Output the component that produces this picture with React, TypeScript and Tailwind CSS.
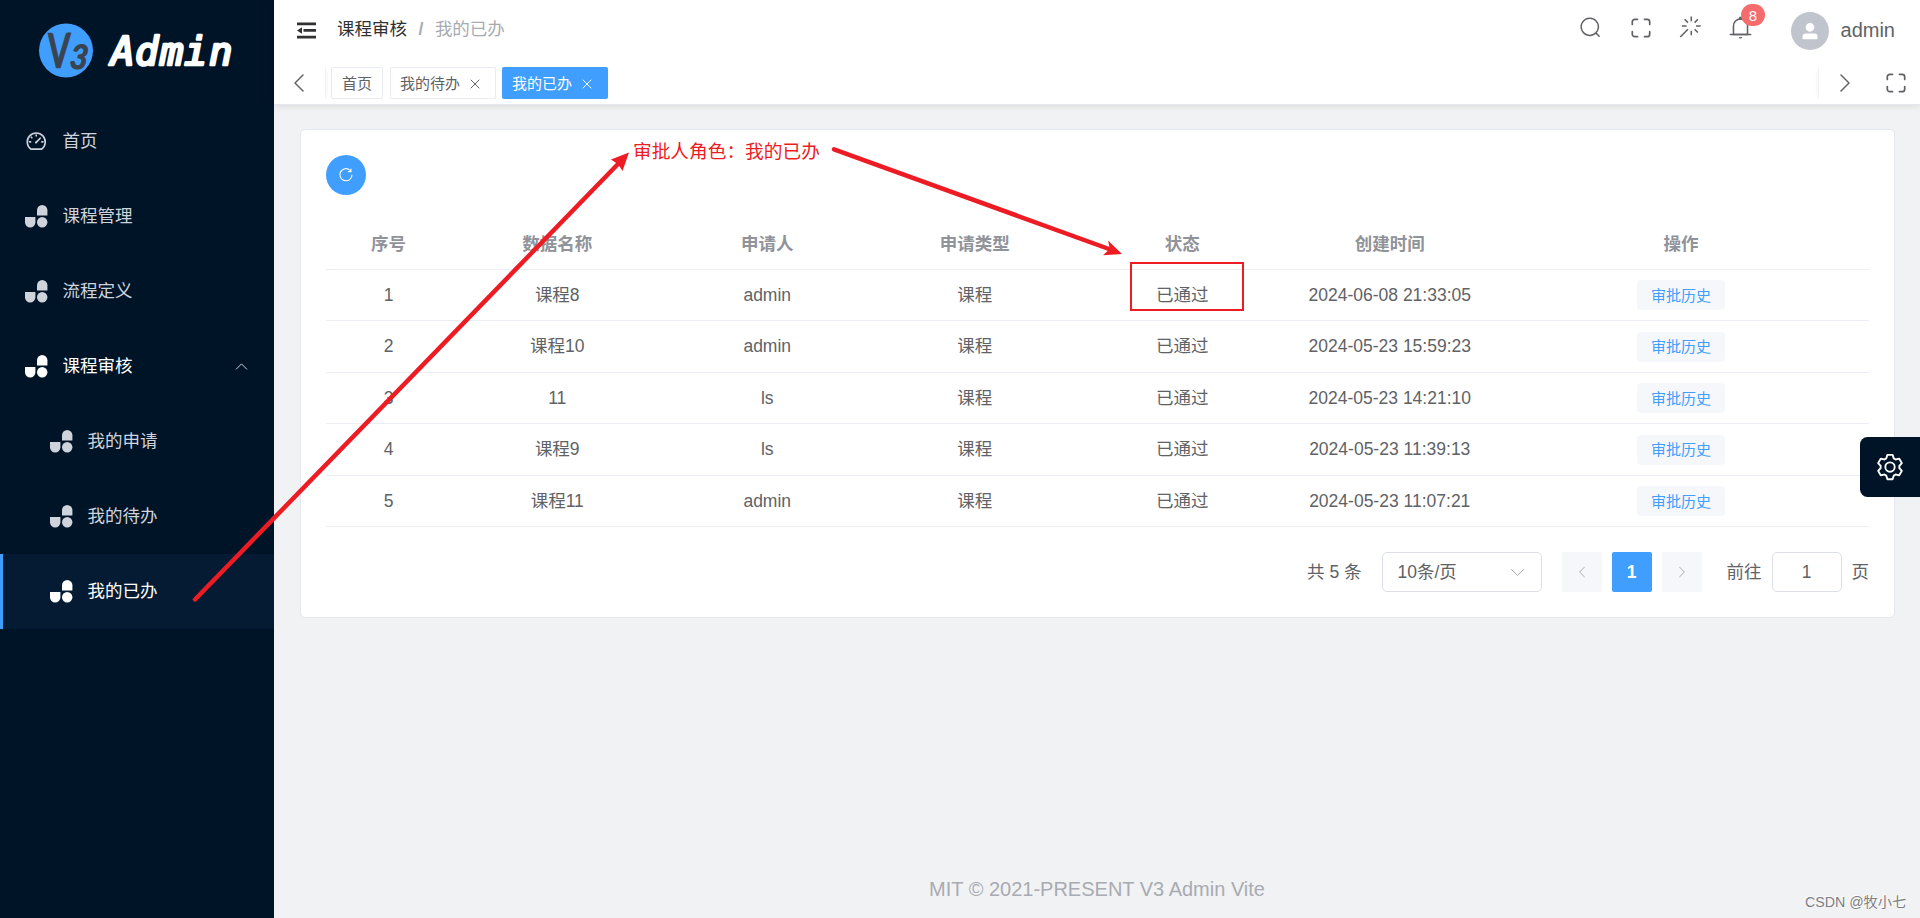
import React from "react";

const MENU = [
  { label: "首页", home: true },
  { label: "课程管理" },
  { label: "流程定义" },
  { label: "课程审核", open: true },
  { label: "我的申请", sub: true },
  { label: "我的待办", sub: true },
  { label: "我的已办", sub: true, active: true },
];

const ROWS = [
  ["1", "课程8", "admin", "课程", "已通过", "2024-06-08 21:33:05"],
  ["2", "课程10", "admin", "课程", "已通过", "2024-05-23 15:59:23"],
  ["3", "11", "ls", "课程", "已通过", "2024-05-23 14:21:10"],
  ["4", "课程9", "ls", "课程", "已通过", "2024-05-23 11:39:13"],
  ["5", "课程11", "admin", "课程", "已通过", "2024-05-23 11:07:21"],
];

const ROW_HEIGHTS = ["h-[51px]", "h-[52px]", "h-[51px]", "h-[52px]", "h-[51px]"];

const HEADERS = ["序号", "数据名称", "申请人", "申请类型", "状态", "创建时间", "操作"];

const GRID =
  "grid grid-cols-[125px_212.5px_207.5px_207.5px_207.5px_207.5px_375px] items-center text-center border-b border-[#ebeef5]";

function Glyph({ d, className }: { d: string[]; className: string }) {
  return (
    <svg viewBox="0 0 1024 1024" fill="currentColor" className={className}>
      {d.map((p) => (
        <path key={p} d={p} />
      ))}
    </svg>
  );
}

const SEARCH = [
  "m795.904 750.72 124.992 124.928a32 32 0 0 1-45.248 45.248L750.656 795.904a416 416 0 1 1 45.248-45.248zM480 832a352 352 0 1 0 0-704 352 352 0 0 0 0 704",
];
const MAGIC = [
  "M512 64h64v192h-64zm0 576h64v192h-64zM160 480v-64h192v64zm576 0v-64h192v64zM249.856 199.04l45.248-45.184L430.848 289.6 385.6 334.848 249.856 199.104zM657.152 606.4l45.248-45.248 135.744 135.744-45.248 45.248zM114.048 923.2 68.8 877.952l316.8-316.8 45.248 45.248zM702.4 334.848 657.152 289.6l135.744-135.744 45.248 45.248z",
];
const BELL = [
  "M512 64a64 64 0 0 1 64 64v64H448v-64a64 64 0 0 1 64-64",
  "M256 768h512V448a256 256 0 1 0-512 0zm256-640a320 320 0 0 1 320 320v384H192V448a320 320 0 0 1 320-320",
  "M96 768h832q32 0 32 32t-32 32H96q-32 0-32-32t32-32m352 128h128a64 64 0 0 1-128 0",
];
const USER = [
  "M288 320a224 224 0 1 0 448 0 224 224 0 1 0-448 0m544 608H160a32 32 0 0 1-32-32v-96a160 160 0 0 1 160-160h448a160 160 0 0 1 160 160v96a32 32 0 0 1-32 32z",
];
const REFRESH = [
  "M784.512 230.272v-50.56a32 32 0 1 1 64 0v149.056a32 32 0 0 1-32 32H667.52a32 32 0 1 1 0-64h92.992A320 320 0 1 0 524.8 833.152a320 320 0 0 0 320-320h64a384 384 0 0 1-384 384 384 384 0 0 1-384-384 384 384 0 0 1 643.712-282.88z",
];
const SETTING = [
  "M600.704 64a32 32 0 0 1 30.464 22.208l35.2 109.376c14.784 7.232 28.928 15.36 42.432 24.512l112.384-24.192a32 32 0 0 1 34.432 15.36L944.32 364.8a32 32 0 0 1-4.032 37.504l-77.12 85.12a357.12 357.12 0 0 1 0 49.024l77.12 85.248a32 32 0 0 1 4.032 37.504l-88.704 153.6a32 32 0 0 1-34.432 15.296L708.8 803.904c-13.44 9.088-27.648 17.28-42.368 24.512l-35.264 109.376A32 32 0 0 1 600.704 960H423.296a32 32 0 0 1-30.464-22.208L357.696 828.48a351.616 351.616 0 0 1-42.56-24.64l-112.32 24.256a32 32 0 0 1-34.432-15.36L79.68 659.2a32 32 0 0 1 4.032-37.504l77.12-85.248a357.12 357.12 0 0 1 0-48.896l-77.12-85.248A32 32 0 0 1 79.68 364.8l88.704-153.6a32 32 0 0 1 34.432-15.296l112.32 24.256c13.568-9.152 27.776-17.408 42.56-24.64l35.2-109.312A32 32 0 0 1 423.232 64H600.64zm-23.424 64H446.72l-36.352 113.088-24.512 11.968a294.113 294.113 0 0 0-34.816 20.096l-22.656 15.36-116.224-25.088-65.28 113.152 79.68 88.192-1.92 27.136a293.12 293.12 0 0 0 0 40.192l1.92 27.136-79.808 88.192 65.344 113.152 116.224-25.024 22.656 15.296a294.113 294.113 0 0 0 34.816 20.096l24.512 11.968L446.72 896h130.688l36.48-113.152 24.448-11.904a288.282 288.282 0 0 0 34.752-20.096l22.592-15.296 116.288 25.024 65.28-113.152-79.744-88.192 1.92-27.136a293.12 293.12 0 0 0 0-40.256l-1.92-27.136 79.808-88.128-65.344-113.152-116.288 24.96-22.592-15.232a287.616 287.616 0 0 0-34.752-20.096l-24.448-11.904L577.344 128zM512 320a192 192 0 1 1 0 384 192 192 0 0 1 0-384m0 64a128 128 0 1 0 0 256 128 128 0 0 0 0-256",
];

function Chevron({ d, className }: { d: string; className: string }) {
  return (
    <svg viewBox="0 0 20 20" fill="none" stroke="currentColor" strokeLinecap="round" strokeLinejoin="round" className={className}>
      <path d={d} vectorEffect="non-scaling-stroke" />
    </svg>
  );
}
const LEFT = "M14 2 6 10 14 18";
const RIGHT = "M6 2 14 10 6 18";
const UP = "M2 14 10 6 18 14";
const DOWN = "M2 6 10 14 18 6";
const CROSS = "M2 2 18 18M18 2 2 18";

function Fullscreen() {
  return (
    <svg viewBox="0 0 20 20" fill="none" stroke="currentColor" strokeWidth="1.7" strokeLinecap="round" className="size-5 shrink-0">
      <path d="M1.3 6.5V3.8A2.5 2.5 0 0 1 3.8 1.3H6.5M13.5 1.3h2.7a2.5 2.5 0 0 1 2.5 2.5v2.7M18.7 13.5v2.7a2.5 2.5 0 0 1-2.5 2.5h-2.7M6.5 18.7H3.8a2.5 2.5 0 0 1-2.5-2.5v-2.7" />
    </svg>
  );
}

function BlocksIcon() {
  return (
    <svg viewBox="0 0 22.5 22.5" fill="currentColor" className="size-[22.5px] shrink-0">
      <path d="M0 12h10.4v5.2a5.2 5.2 0 0 1-10.4 0z" />
      <path d="M12 10.4V5.2a5.2 5.2 0 0 1 10.4 0v5.2z" />
      <circle cx="17.2" cy="17.2" r="5.2" />
    </svg>
  );
}

function DashboardIcon() {
  return (
    <svg viewBox="0 0 22.5 22.5" fill="none" stroke="currentColor" strokeWidth="1.6" strokeLinecap="round" className="size-[22.5px] shrink-0">
      <path d="M5.8 19.1a9 9 0 1 1 10.9 0z" strokeLinejoin="round" />
      <path d="M11.2 12.4 15.2 8.2M11.2 5v1M6.3 7.2l.6.6M4.6 11.9h1M16.9 11.9h1" />
      <circle cx="11" cy="12.6" r="1" fill="currentColor" stroke="none" />
    </svg>
  );
}

function Sidebar() {
  return (
    <aside className="flex w-[274px] shrink-0 flex-col bg-[#001428] text-[#cfd3dc]">
      <div className="h-[104px] shrink-0">
        <svg viewBox="0 0 274 104" className="h-[104px] w-[274px]">
          <circle cx="66" cy="50.5" r="27" fill="#409eff" />
          <g fill="#3a4350" stroke="#3a4350" strokeLinejoin="round" fontFamily="Lato, sans-serif">
            <text transform="translate(47 68) rotate(-1) skewX(-3) scale(.68 1)" fontSize="48" fontWeight="700" strokeWidth="1">V</text>
            <text transform="translate(69 68) rotate(6) scale(.92 1)" fontSize="34" fontWeight="700" fontStyle="italic" strokeWidth="1">3</text>
          </g>
          <text
            y="65"
            x="111 135 160 184 209"
            fill="#fff"
            stroke="#fff"
            strokeWidth="2.6"
            strokeLinejoin="round"
            fontFamily="'DejaVu Sans Mono', monospace"
            fontStyle="italic"
            fontSize="39"
          >
            Admin
          </text>
        </svg>
      </div>
      {MENU.map((m) => (
        <div
          key={m.label}
          className={
            "flex h-[75px] shrink-0 items-center text-[17.5px] " +
            (m.sub ? "pl-[50px] " : "pl-[25px] ") +
            (m.active ? "bg-[#041b33] text-white shadow-[inset_3px_0_0_#409eff] " : "") +
            (m.open ? "text-white" : "")
          }
        >
          {m.home ? <DashboardIcon /> : <BlocksIcon />}
          <span className="ml-[15px] flex-1 leading-none">{m.label}</span>
          {m.open && <Chevron d={UP} className="mr-[26px] size-[13px] text-[#cfd3dc]" />}
        </div>
      ))}
    </aside>
  );
}

function Header() {
  return (
    <header className="relative flex h-[105px] shrink-0 flex-col border-b border-[#e4e7ed] bg-white shadow-[0_0_8px_rgba(0,0,0,0.12)]">
      <div className="flex h-[62px] items-center pl-[23px] pr-[25px]">
        <svg viewBox="0 0 19 17" fill="#303133" className="mb-px h-[17px] w-[19px]">
          <path d="M0 .5h19v2.7H0zM6.500 7.100h12.500v2.700H6.500zM0 13.800h19v2.700H0zM0 8.450 5 5.200v6.500z" />
        </svg>
        <div className="ml-[21px] flex flex-1 items-center pb-[2px] text-[17.5px] leading-none">
          <span className="text-[#303133]">课程审核</span>
          <span className="mx-[11.5px] text-[#a8abb2] font-bold">/</span>
          <span className="text-[#a8abb2]">我的已办</span>
        </div>
        <div className="flex items-center pb-[7px]">
          <Glyph d={SEARCH} className="mr-[29px] size-[23px]" />
          <Fullscreen />
          <Glyph d={MAGIC} className="ml-[27px] mr-[25px] size-[25px]" />
          <div className="relative mr-[38px]">
            <Glyph d={BELL} className="size-[25px]" />
            <span className="absolute -top-[11px] left-[13px] flex h-[22px] w-6 items-center justify-center rounded-full bg-[#f56c6c] text-[15px] leading-none text-white">
              8
            </span>
          </div>
        </div>
        <span className="flex size-[37.500px] items-center justify-center rounded-full bg-[#c0c4cc] text-white">
          <Glyph d={USER} className="size-5" />
        </span>
        <span className="ml-[12px] pb-[2px] text-[20px] leading-none">admin</span>
      </div>
      <div className="flex h-[42px] items-center pr-[14px]">
        <div className="flex h-8 w-[52px] items-center border-r border-[#f3f3f3] pl-[15px] shadow-[3px_0_4px_-3px_rgba(0,0,0,0.08)]">
          <Chevron d={LEFT} className="size-5 [stroke-width:1.500px]" />
        </div>
        <div className="ml-[5px] flex flex-1 text-[15px] leading-none">
          <span className="flex h-8 w-[52px] items-center justify-center rounded-[2px] border border-[#e9ebf2] text-[#606266]">首页</span>
          <span className="ml-[7px] flex h-8 w-[106px] items-center rounded-[2px] border border-[#e9ebf2] pl-[9px] text-[#606266]">
            我的待办
            <Chevron d={CROSS} className="ml-[10px] mt-[2px] size-[10px]" />
          </span>
          <span className="ml-[6px] flex h-8 w-[106px] items-center rounded-[2px] bg-[#409eff] pl-[10px] text-white">
            我的已办
            <Chevron d={CROSS} className="ml-[10px] mt-[2px] size-[10px]" />
          </span>
        </div>
        <div className="mr-[31px] flex h-8 items-center border-l border-[#f3f3f3] pl-[16px] shadow-[-3px_0_4px_-3px_rgba(0,0,0,0.08)]">
          <Chevron d={RIGHT} className="size-5 [stroke-width:1.500px]" />
        </div>
        <div className="pb-px"><Fullscreen /></div>
      </div>
    </header>
  );
}

function TaskTable() {
  return (
    <div>
      <div className={GRID + " h-[51px] font-bold text-[#909399]"}>
        {HEADERS.map((h) => (
          <span key={h} className="pt-[2px] leading-none">{h}</span>
        ))}
      </div>
      {ROWS.map((r, i) => (
        <div key={r[0]} className={GRID + " " + ROW_HEIGHTS[i]}>
          {r.map((c, j) => (
            <span key={j} className="pt-px leading-none">{c}</span>
          ))}
          <span className="mx-auto flex h-[30px] w-[88px] items-center justify-center rounded-[4px] bg-[#f5f7fa] text-[15px] leading-none text-[#409eff]">
            审批历史
          </span>
        </div>
      ))}
    </div>
  );
}

function Pagination() {
  return (
    <div className="mt-[25px] flex h-10 items-center justify-end leading-none">
      <span className="pt-px">共 5 条</span>
      <span className="ml-5 flex h-10 w-[160px] items-center justify-between rounded-[5px] border border-[#dcdfe6] pl-[15px] pr-[16px]">
        <span className="pt-px">10条/页</span>
        <Chevron d={DOWN} className="size-[15px] text-[#a8abb2]" />
      </span>
      <span className="ml-5 flex size-10 items-center justify-center rounded-[2px] bg-[#f5f7fa] text-[#a8abb2]">
        <Chevron d={LEFT} className="size-[12px]" />
      </span>
      <span className="ml-[10px] flex size-10 items-center justify-center rounded-[2px] bg-[#409eff] pt-px font-bold text-white">1</span>
      <span className="ml-[10px] flex size-10 items-center justify-center rounded-[2px] bg-[#f5f7fa] text-[#a8abb2]">
        <Chevron d={RIGHT} className="size-[12px]" />
      </span>
      <span className="ml-[25px] pt-px">前往</span>
      <span className="ml-[10px] flex h-10 w-[70px] items-center justify-center rounded-[5px] border border-[#dcdfe6] pt-px">1</span>
      <span className="ml-[10px] pt-px">页</span>
    </div>
  );
}

function Annotations() {
  return (
    <div className="pointer-events-none absolute inset-0">
      <svg viewBox="0 0 1920 918" className="absolute inset-0 h-[918px] w-[1920px]" fill="none" stroke="#ed1c24">
        <path d="M195 599.500 618 164M834 149.300 1109 249" strokeWidth="4.500" strokeLinecap="round" />
        <path d="M629 152.500 611 159.500 617 163.500 619 165.500 622.500 171z" fill="#ed1c24" stroke="none" />
        <path d="M1122 254 1108 240.500 1109.500 247.500 1107.500 251 1103 255.200z" fill="#ed1c24" stroke="none" />
        <rect x="1131" y="263" width="112" height="47" strokeWidth="2" />
      </svg>
      <span className="absolute left-[633px] top-[142px] whitespace-nowrap text-[18.700px] leading-[20px] text-[#ed1c24]">
        审批人角色：我的已办
      </span>
      <span className="absolute left-[1805px] top-[894px] whitespace-nowrap text-[14.200px] leading-[16px] text-[#7d7f83] [text-shadow:-1px_-1px_0_#fff]">
        CSDN @牧小七
      </span>
    </div>
  );
}

export default function App() {
  return (
    <div className="relative flex h-[918px] w-[1920px] overflow-hidden bg-[#f1f2f4] font-['Liberation_Sans','Noto_Sans_CJK_SC',sans-serif] text-[17.500px] text-[#606266]">
      <Sidebar />
      <main className="flex min-w-0 flex-1 flex-col">
        <Header />
        <section className="ml-[26px] mr-[25px] mt-6 h-[489px] shrink-0 rounded-[5px] border border-[#e4e7ed] bg-white px-[25px] pt-[25px]">
          <div className="flex size-10 items-center justify-center rounded-full bg-[#409eff] text-white">
            <Glyph d={REFRESH} className="size-[17.500px]" />
          </div>
          <div className="mt-6">
            <TaskTable />
          </div>
          <Pagination />
        </section>
        <footer className="mt-auto flex h-[58px] items-center justify-center text-[20px] leading-none text-[#a8abb2]">
          MIT © 2021-PRESENT V3 Admin Vite
        </footer>
      </main>
      <div className="absolute right-0 top-[437px] flex size-[60px] items-center justify-center rounded-l-[7.500px] bg-[#001428] text-white">
        <Glyph d={SETTING} className="size-[30px]" />
      </div>
      <Annotations />
    </div>
  );
}
